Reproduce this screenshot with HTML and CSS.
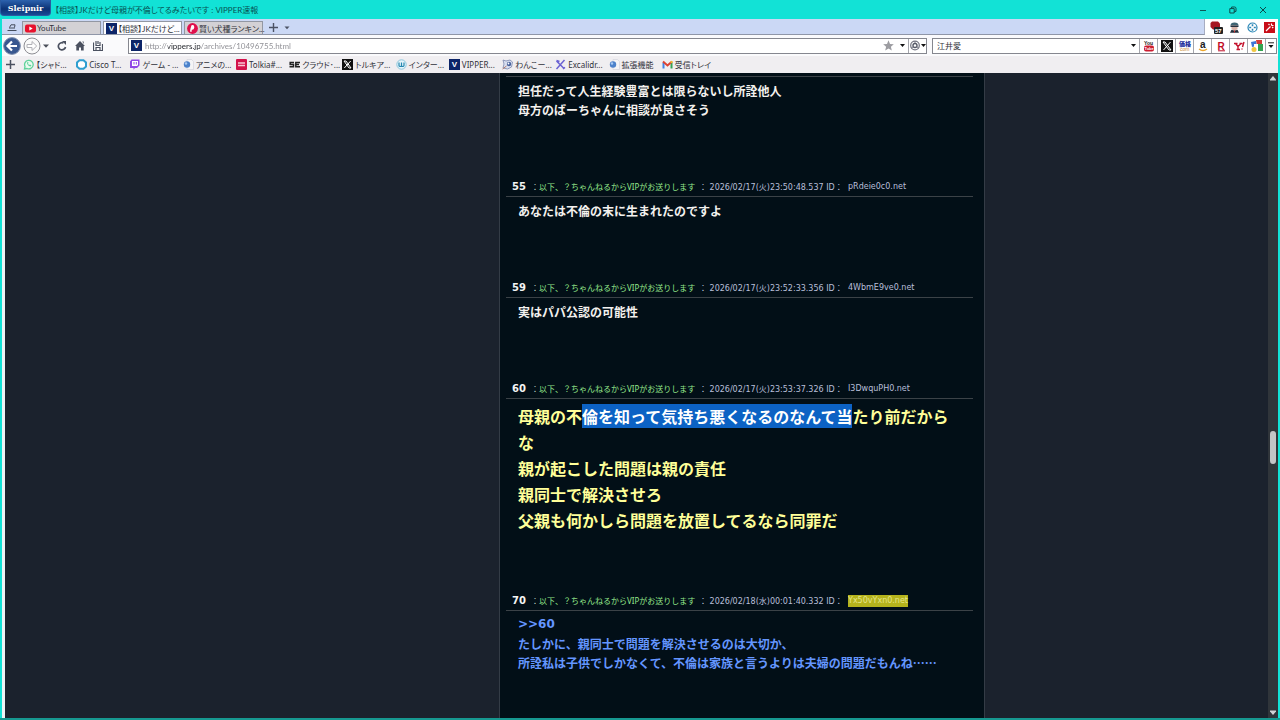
FILE: index.html
```html
<!DOCTYPE html>
<html lang="ja">
<head>
<meta charset="utf-8">
<title>【相談】JKだけど母親が不倫してるみたいです : VIPPER速報</title>
<link rel="stylesheet" href="styles.css">
</head>
<body>
<div class="window">
  <header class="titlebar">
    <button class="logo">Sleipnir</button>
    <span class="title">【相談】JKだけど母親が不倫してるみたいです : VIPPER速報</span>
    <div class="controls">
      <button aria-label="最小化"><svg width="8" height="8" viewBox="0 0 8 8"><path d="M1 4.5h6" stroke="#0b5a58" fill="none"/></svg></button>
      <button aria-label="元に戻す"><svg width="8" height="8" viewBox="0 0 8 8"><path d="M.8 2.6h4.4v4.4H.8zM2.6 2.4V1h3q1.4 0 1.4 1.4v3H5.4" stroke="#0b4a4a" fill="none"/></svg></button>
      <button aria-label="閉じる"><svg width="8" height="8" viewBox="0 0 8 8"><path d="M1 1l6 6M7 1L1 7" stroke="#0b4a4a" fill="none"/></svg></button>
    </div>
  </header>

  <div class="frame">
    <div class="tabrow">
      <div class="tabs">
        <button class="mini" aria-label="タブ一覧"><svg width="10" height="8" viewBox="0 0 10 8"><path d="M2.5 3.5L4 .8h4L7.500 3.500M.5 6.500h9M2 4h6" stroke="#444c5c" fill="none"/></svg></button>
        <button class="tab"><svg class="ico" viewBox="0 0 11 11"><rect y="1.500" width="11" height="8" rx="2" fill="#e8112d"/><path d="M4.300 3.500v4l3.400-2z" fill="#fff"/></svg><span>YouTube</span></button>
        <button class="tab active"><span class="ico vicon">V</span><span>【相談】JKだけど...</span></button>
        <button class="tab"><svg class="ico" viewBox="0 0 11 11"><circle cx="5.500" cy="5.500" r="5.400" fill="#e0104c"/><path d="M4.500 2.200q3-.8 2.800 2.300Q7 7 4.800 6.800L4.500 9 3 8.500l.5-3z" fill="#fff"/></svg><span>賢い犬種ランキン...</span></button>
        <button class="mini plus" aria-label="新しいタブ"><svg width="9" height="9" viewBox="0 0 9 9"><path d="M4.500 0v9M0 4.500h9" stroke="#4b5264" stroke-width="1.400"/></svg></button>
        <button class="mini" aria-label="タブメニュー"><svg width="6" height="4" viewBox="0 0 6 4"><path d="M.5.5h5L3 3.200z" fill="#4b5264"/></svg></button>
      </div>
      <div class="extensions">
        <button aria-label="ブロッカー"><svg width="13" height="13" viewBox="0 0 13 13"><path d="M2 .5h6l2 2v4L8 8.500H3L.5 6V2z" fill="#a51620"/><rect x="4" y="6" width="9" height="7" rx="1" fill="#222"/><text x="5" y="12" font-size="6" fill="#fff" font-family="Liberation Sans" font-weight="700">57</text></svg></button>
        <button aria-label="エージェント"><svg width="11" height="11" viewBox="0 0 11 11"><path d="M1.500 3.500q0-3 4-3t4 3z" fill="#3f6472"/><path d="M2.500 3.500h6v3l-1.500 2h-3l-1.500-2z" fill="#d9b3a8"/><path d="M1.500 3.500h8v1.400h-8zM1 10.800l1.500-3 3 1 3-1 1.500 3z" fill="#25303d"/><path d="M5 8.500h1v2H5z" fill="#c33"/></svg></button>
        <button aria-label="設定"><svg width="11" height="11" viewBox="0 0 11 11"><circle cx="5.500" cy="5.500" r="4.500" fill="#fff" stroke="#2b87b6" stroke-width="1.200"/><path d="M5.500 2.200v2M5.500 6.800v2M2.200 5.500h2M6.800 5.500h2" stroke="#2b87b6" stroke-width="1.600"/></svg></button>
        <button aria-label="ワンド"><svg width="11" height="11" viewBox="0 0 11 11"><rect width="11" height="11" fill="#c80d18"/><path d="M2 9l4.500-4.500M7.500 1.500v2M9.500 3.500h-2M9.200 6l-1-1M4.500 2l1 1" stroke="#fff" stroke-width="1.200"/></svg></button>
      </div>
    </div>

    <div class="toolbar">
      <div class="nav">
        <button aria-label="戻る"><svg width="18" height="18" viewBox="0 0 18 18"><circle cx="9" cy="9" r="8.400" fill="#38578f" stroke="#8392b0"/><path d="M14 9H5M9 4.500L4.500 9 9 13.500" stroke="#fff" stroke-width="2.200" fill="none"/></svg></button>
        <button aria-label="進む"><svg width="18" height="18" viewBox="0 0 18 18"><circle cx="9" cy="9" r="8" fill="#fafafa" stroke="#8d8d93"/><path d="M4 7.500h5V4.500L13.700 9 9 13.500v-3H4z" stroke="#b0b0b6" fill="#fff"/></svg></button>
        <button aria-label="履歴"><svg width="6" height="4" viewBox="0 0 6 4"><path d="M0 .5h6L3 3.800z" fill="#4b4f5a"/></svg></button>
        <button class="gap" aria-label="更新"><svg width="10" height="10" viewBox="0 0 10 10"><path d="M8.500 6A3.600 3.600 0 1 1 6.500 2" stroke="#4b5160" stroke-width="1.700" fill="none"/><path d="M5 0h4v4z" fill="#4b5160"/></svg></button>
        <button class="gap" aria-label="ホーム"><svg width="10" height="10" viewBox="0 0 10 10"><path d="M5 0l5 5H8.700v4.500H6V6.500H4v3H1.300V5H0zM7.300.5h1.400v2.500z" fill="#4b5160"/></svg></button>
        <button class="gap" aria-label="保存"><svg width="10" height="10" viewBox="0 0 10 10"><path d="M.5 1.500v8h9V3M3 0v4.500h4V1M3 9V6.500h4V9M5 0v3" stroke="#4b5160" stroke-width="1.200" fill="none"/></svg></button>
      </div>
      <div class="address">
        <label class="ico vicon" for="url">V</label>
        <input id="url" class="url" type="text" value="http://vippers.jp/archives/10496755.html">
        <button aria-label="お気に入り"><svg width="11" height="11" viewBox="0 0 11 11"><path d="M5.500.3l1.500 3.600 3.800.3-2.900 2.500.9 3.800-3.300-2-3.300 2 .9-3.800L.2 4.200 4 3.900z" fill="#9c9ca1"/></svg></button>
        <button class="drop" aria-label="履歴を表示"><svg width="5" height="3" viewBox="0 0 5 3"><path d="M0 0h5L2.500 3z" fill="#111"/></svg></button>
        <button class="cell" aria-label="エンジン"><svg width="16" height="11" viewBox="0 0 16 11"><circle cx="5" cy="5.500" r="4.300" fill="none" stroke="#777986" stroke-width="1.300"/><circle cx="5" cy="5.500" r="2" fill="none" stroke="#555967" stroke-width="1.400"/><path d="M5 1v2M8.500 8L6.500 6.500M1.500 8l2-1.500" stroke="#777986"/><path d="M11 4h5l-2.500 3z" fill="#111"/></svg></button>
      </div>
      <div class="search">
        <input class="query" type="text" aria-label="検索" value="江井愛">
        <button class="drop" aria-label="検索履歴"><svg width="5" height="3" viewBox="0 0 5 3"><path d="M0 0h5L2.500 3z" fill="#111"/></svg></button>
        <button class="cell" aria-label="YouTube"><svg width="12" height="12" viewBox="0 0 12 12"><text x="1" y="5" font-size="5" font-weight="700" font-family="Liberation Sans" fill="#222">You</text><rect x="1" y="5.500" width="10" height="6" rx="2" fill="#cc1c30"/><text x="1.500" y="10" font-size="4" font-weight="700" font-family="Liberation Sans" fill="#fff">Tube</text></svg></button>
        <button class="cell" aria-label="X"><svg width="12" height="12" viewBox="0 0 12 12"><rect width="12" height="12" fill="#111"/><path d="M2 2h2l6 8H8zM9.500 2L2.500 10" stroke="#fff" fill="none"/></svg></button>
        <button class="cell" aria-label="価格.com"><svg width="14" height="12" viewBox="0 0 14 12"><text x="1" y="6" font-size="6" font-weight="900" font-family="Noto Sans CJK JP" fill="#1d2f9c">価格</text><text x="2" y="11" font-size="5" font-family="Liberation Sans" fill="#c98a36">com</text></svg></button>
        <button class="cell" aria-label="Amazon"><svg width="12" height="12" viewBox="0 0 12 12"><text x="3" y="8" font-size="10" font-weight="700" font-family="Liberation Sans" fill="#222">a</text><path d="M2 9q4 3 8 0" stroke="#eda52a" fill="none" stroke-width="1.300"/></svg></button>
        <button class="cell" aria-label="楽天"><svg width="12" height="12" viewBox="0 0 12 12"><text x="2.500" y="9.500" font-size="10" font-weight="700" font-family="Liberation Sans" fill="#bf0d28">R</text><path d="M3 10.800h7" stroke="#bf0d28"/></svg></button>
        <button class="cell" aria-label="Yahoo!"><svg width="12" height="12" viewBox="0 0 12 12"><path d="M1 3.500h3.500M2.500 3.500L5 6.500 8 3.500M6.500 3.500h3M5 6.500V9M3.500 9.500h3.500M11 2L9.500 7M9 8.500v1" stroke="#c4122d" stroke-width="1.400" fill="none"/></svg></button>
        <button class="cell" aria-label="Google"><svg width="12" height="12" viewBox="0 0 12 12"><path d="M0 2l5-1 1 5-5 1z" fill="#3d75d6"/><path d="M5 0h6v5H6z" fill="#d33b37"/><path d="M7 4h5v7H7z" fill="#32a350"/><circle cx="3" cy="9.500" r="2.500" fill="#f0c640"/><path d="M3 4h4v3H3z" fill="#fff"/></svg></button>
        <button class="cell last" aria-label="その他"><svg width="6" height="7" viewBox="0 0 6 7"><path d="M0 .8h6" stroke="#222"/><path d="M.5 3h5L3 6z" fill="#111"/></svg></button>
      </div>
    </div>

    <nav class="bookmarks">
      <button class="add" aria-label="追加"><svg width="9" height="9" viewBox="0 0 9 9"><path d="M4.500 0v9M0 4.500h9" stroke="#4b5160" stroke-width="1.500"/></svg></button>
      <div class="links">
        <a href="#"><svg class="ico" viewBox="0 0 11 11"><path d="M1.500 10l.5-2.500a4.300 4.300 0 1 1 2 2z" fill="#eafaf0" stroke="#5fd29a" stroke-width="1.300"/><path d="M4 3.500q0 3 3.500 4l1-1-1.500-1-1 .5-1-1.200.5-1L5 3z" fill="#5fd29a"/></svg>【シャド...</a>
        <a href="#"><svg class="ico" viewBox="0 0 11 11"><path d="M3.500 1.200h4l2.500 2.300v4L7.500 9.800h-4L1 7.500v-4z" fill="#fff" stroke="#2f9fd0" stroke-width="2"/></svg>Cisco T...</a>
        <a href="#"><svg class="ico" viewBox="0 0 11 11"><path d="M2.500.5h8v6l-2.500 2.500H6l-1.500 1.800V9H1V2.500z" fill="#9147e6"/><path d="M3 2h6v4L8 7H3z" fill="#fff"/><path d="M5 3v2.500M7.300 3v2.500" stroke="#9147e6"/></svg>ゲーム - ...</a>
        <a href="#"><svg class="ico" viewBox="0 0 11 11"><path d="M4 .5h4.500l2 2v8H4z" fill="#f4f4f6" stroke="#d4d4dc" stroke-width=".7"/><circle cx="4" cy="5.500" r="3.200" fill="#4c82cb"/><circle cx="3" cy="4.500" r="1.200" fill="#a8cbf2"/></svg>アニメの...</a>
        <a href="#"><svg class="ico" viewBox="0 0 11 11"><rect width="11" height="11" rx="1" fill="#d3134c"/><path d="M2 4h7M2 6.500h7" stroke="#f9c7d5" stroke-width="1.300"/></svg>Tolkia#...</a>
        <a href="#"><svg class="ico" viewBox="0 0 11 11"><path d="M5 3.500H1.200v2H4.500v2.300H.5M11 3.500H6.800v4.300H11M7 5.600h3" stroke="#222" stroke-width="1.500" fill="none"/></svg>クラウド･...</a>
        <a href="#"><svg class="ico" viewBox="0 0 11 11"><rect width="11" height="11" fill="#111"/><path d="M2 2h2l5 7H7zM8.700 2L2.300 9" stroke="#fff" fill="none"/></svg>トルキア...</a>
        <a href="#"><svg class="ico" viewBox="0 0 11 11"><circle cx="5.500" cy="5.500" r="4.700" fill="#e5f4fa" stroke="#8cc6dc"/><path d="M3 3.500v3q0 1 1.200 1t1.300-1v-3v3q0 1 1.200 1T8 6.500v-3" stroke="#2687b0" stroke-width="1.200" fill="none"/></svg>インター...</a>
        <a href="#"><span class="ico vicon">V</span>VIPPER...</a>
        <a href="#"><svg class="ico" viewBox="0 0 11 11"><path d="M1 1l3 1 4-1 2.500 2-1 5-4 2L1 9l1-4z" fill="#d9dff0" stroke="#7a86ad" stroke-width=".8"/><circle cx="7" cy="5" r="2.200" fill="#49619b"/><circle cx="6.500" cy="4.500" r=".9" fill="#fff"/><path d="M.5 10l4-3" stroke="#b27b69"/></svg>わんこー...</a>
        <a href="#"><svg class="ico" viewBox="0 0 11 11"><path d="M1.500 2l7.500 7.500M9.500 1L1.500 10M1.500 1.500l3 1M8 9.800l2-1.500" stroke="#6b62d3" stroke-width="1.500"/></svg>Excalidr...</a>
        <a href="#"><svg class="ico" viewBox="0 0 11 11"><path d="M4 .5h4.500l2 2v8H4z" fill="#f4f4f6" stroke="#d4d4dc" stroke-width=".7"/><circle cx="4" cy="5.500" r="3.200" fill="#4c82cb"/><circle cx="3" cy="4.500" r="1.200" fill="#a8cbf2"/></svg>拡張機能</a>
        <a href="#"><svg class="ico" viewBox="0 0 11 11"><path d="M1.500 9.500v-6" stroke="#4183e5" stroke-width="2"/><path d="M9.500 9.500v-6" stroke="#35a455" stroke-width="2"/><path d="M1 2.500l4.500 4 4.500-4" stroke="#dd4334" stroke-width="2" fill="none"/><path d="M8.500 2h2v2h-2z" fill="#f0b52a"/></svg>受信トレイ</a>
      </div>
    </nav>

    <div class="viewport">
      <div class="page">
        <main class="thread">
          <article class="post">
            <header class="meta clipped"></header>
            <div class="text">担任だって人生経験豊富とは限らないし所詮他人<br>母方のばーちゃんに相談が良さそう</div>
          </article>
          <article class="post">
            <header class="meta"><b class="num">55</b><span class="name"><i>：</i>以下、？ちゃんねるからVIPがお送りします</span><span class="date">： 2026/02/17(火)23:50:48.537 ID：</span><span class="uid">pRdeie0c0.net</span></header>
            <div class="text">あなたは不倫の末に生まれたのですよ</div>
          </article>
          <article class="post">
            <header class="meta"><b class="num">59</b><span class="name"><i>：</i>以下、？ちゃんねるからVIPがお送りします</span><span class="date">： 2026/02/17(火)23:52:33.356 ID：</span><span class="uid">4WbmE9ve0.net</span></header>
            <div class="text">実はパパ公認の可能性</div>
          </article>
          <article class="post">
            <header class="meta"><b class="num">60</b><span class="name"><i>：</i>以下、？ちゃんねるからVIPがお送りします</span><span class="date">： 2026/02/17(火)23:53:37.326 ID：</span><span class="uid">I3DwquPH0.net</span></header>
            <div class="text large">母親の不<span class="selected">倫を知って気持ち悪くなるのなんて当</span>たり前だからな<br>親が起こした問題は親の責任<br>親同士で解決させろ<br>父親も何かしら問題を放置してるなら同罪だ</div>
          </article>
          <article class="post">
            <header class="meta"><b class="num">70</b><span class="name"><i>：</i>以下、？ちゃんねるからVIPがお送りします</span><span class="date">： 2026/02/18(水)00:01:40.332 ID：</span><span class="uid marked">Yx50vYxn0.net</span></header>
            <div class="text owner"><a href="#">&gt;&gt;60</a>たしかに、親同士で問題を解決させるのは大切か、<br>所詮私は子供でしかなくて、不倫は家族と言うよりは夫婦の問題だもんね……</div>
          </article>
        </main>
      </div>
      <div class="scrollbar">
        <svg width="6" height="5" viewBox="0 0 6 5"><path d="M3 0l3 3.500v1H0v-1z" fill="#d0d2d4"/></svg>
        <div class="before"></div>
        <div class="thumb"></div>
        <div class="after"></div>
        <svg width="6" height="5" viewBox="0 0 6 5"><path d="M3 5L0 1.500V.5h6v1z" fill="#d0d2d4"/></svg>
      </div>
    </div>
  </div>
</div>
</body>
</html>
```
FILE: styles.css
```css
* { box-sizing: border-box; }
body {
  margin: 0;
  font-family: "Noto Sans", "Noto Sans CJK JP", sans-serif;
  font-size: 8px;
  color: #30323a;
}
button {
  display: flex;
  align-items: center;
  justify-content: center;
  padding: 0;
  border: 0;
  background: none;
  font: inherit;
  color: inherit;
}
input {
  min-width: 0;
  padding: 0;
  border: 0;
  outline: 0;
  background: none;
  font: inherit;
  color: inherit;
}
a { color: inherit; text-decoration: none; }
svg { display: block; flex: none; }

.window {
  display: flex;
  flex-direction: column;
  height: 100vh;
  overflow: hidden;
  background: #12e2d6;
}

/* Title bar */
.titlebar {
  display: flex;
  align-items: center;
  flex: none;
  height: 19px;
}
.logo {
  align-self: flex-start;
  width: 51px;
  height: 16px;
  border: 1px solid #2b5aa0;
  border-top: 0;
  border-radius: 0 0 4px 4px;
  background: linear-gradient(#2c62ae, #0c3274 60%, #174a97);
  color: #fff;
  font-family: "DejaVu Serif", serif;
  font-weight: 700;
}
.title {
  flex: 1;
  padding-left: 4px;
  font-family: Lato, "Noto Sans CJK JP", sans-serif;
  font-feature-settings: "palt";
  color: #075353;
  white-space: nowrap;
}
.controls { display: flex; gap: 22px; padding-right: 13px; }

.frame {
  display: flex;
  flex-direction: column;
  flex: 1;
  min-height: 0;
  padding: 0 2px;
  border-bottom: 2px solid #169890;
}

/* Tabs */
.tabrow {
  display: flex;
  flex: none;
  height: 16px;
  background: #fff;
}
.tabs {
  display: flex;
  align-items: flex-end;
  flex: 1;
  gap: 2px;
  padding-left: 4px;
  border-right: 1px solid #a7adc2;
  border-bottom: 1px solid #8f96a8;
  background: #cbd8f5;
}
.mini { width: 12px; height: 13px; }
.plus { margin-left: 2px; }
.tab {
  justify-content: flex-start;
  gap: 1px;
  width: 79px;
  height: 13px;
  padding: 0 1px 0 2px;
  border: 1px solid #9297a3;
  border-bottom: 0;
  background: #d3d1d5;
  font-family: Lato, "Noto Sans CJK JP", sans-serif;
  font-feature-settings: "palt";
  white-space: nowrap;
}
.tab.active { background: #fdfdff; }
.mini + .tab { margin-left: 2px; }
.ico { flex: none; width: 11px; height: 11px; }
.vicon {
  display: flex;
  align-items: center;
  justify-content: center;
  background: #0c2468;
  color: #fff;
  font: 700 8px "Liberation Sans", sans-serif;
}
.extensions {
  display: flex;
  align-items: center;
  justify-content: space-between;
  width: 73px;
  padding: 0 3px 0 5px;
}

/* Toolbar */
.toolbar {
  display: flex;
  align-items: center;
  flex: none;
  gap: 5px;
  height: 21px;
  padding: 0 1px;
  background: #fafafc;
}
.nav { display: flex; align-items: center; gap: 2px; width: 120px; }
.nav .gap { margin-left: 6px; }
.address, .search {
  display: flex;
  align-items: center;
  height: 16px;
  border: 1px solid #85878f;
  background: #fff;
}
.address { flex: 1; gap: 3px; padding-left: 2px; }
.url {
  flex: 1;
  font-family: Lato, sans-serif;
  background: linear-gradient(90deg, #8c8c92 23px, #202228 23px, #202228 56px, #8c8c92 56px);
  background-clip: text;
  -webkit-background-clip: text;
  color: transparent;
}
.drop { width: 11px; height: 14px; }
.cell {
  width: 18px;
  height: 14px;
  border-left: 1px solid #a5a6ad;
}
.address .drop { margin-right: -3px; }
.search { width: 345px; }
.query { flex: 1; padding-left: 4px; }
.cell.last { width: 11px; }

/* Bookmarks */
.bookmarks {
  display: flex;
  align-items: center;
  flex: none;
  height: 17px;
  padding-left: 4px;
  background: #f0eef1;
}
.add { width: 9px; margin-right: 8px; }
.links {
  display: grid;
  grid-template-columns: repeat(13, 1fr);
  width: 692px;
}
.links a {
  display: flex;
  align-items: center;
  gap: 2px;
  font-feature-settings: "palt";
  white-space: nowrap;
}

/* Page */
.viewport {
  display: flex;
  flex: 1;
  min-height: 0;
  border-left: 3px solid #eef3f5;
}
.page {
  display: grid;
  grid-template-columns: 494fr 486px 283fr;
  flex: 1;
  overflow: hidden;
  background: #1b222d;
}
.thread {
  grid-column: 2;
  padding: 3px 11px 0 6px;
  border: solid #343c46;
  border-width: 0 1px;
  background: #020f17;
}
.meta {
  display: flex;
  align-items: center;
  height: 20px;
  padding-left: 6px;
  border-bottom: 1px solid #3b4247;
  font-family: "DejaVu Sans", "Noto Sans CJK JP", sans-serif;
  color: #b9bfd9;
  white-space: nowrap;
}
.meta.clipped { height: 1px; }
.num { width: 19px; font-size: 10px; color: #f4f4f4; }
.name { width: 168px; color: #95e88c; font-family: "Noto Sans", "Noto Sans CJK JP", sans-serif; }
.name i { font-style: normal; color: #b9c9c0; }
.date { width: 149px; }
.marked { background: #b5b31c; color: #e6e58a; line-height: 12px; }
.text {
  padding: 4px 16px 58px 12px;
  font: 700 12px/19px "Noto Sans CJK JP", sans-serif;
  color: #f3f1ee;
}
.large { font-size: 16px; line-height: 26px; color: #ffff99; }
.selected { background: #0c62c4; color: #fff; }
.owner { color: #6496ff; }
.owner a { display: block; font-family: "DejaVu Sans", sans-serif; }

.scrollbar {
  display: flex;
  flex-direction: column;
  align-items: center;
  flex: none;
  width: 10px;
  padding: 3px 0;
  background: #30353a;
}
.before { flex: 352; }
.thumb {
  width: 6px;
  height: 33px;
  border-radius: 3px;
  background: #c3c4c6;
}
.after { flex: 247; }
```
